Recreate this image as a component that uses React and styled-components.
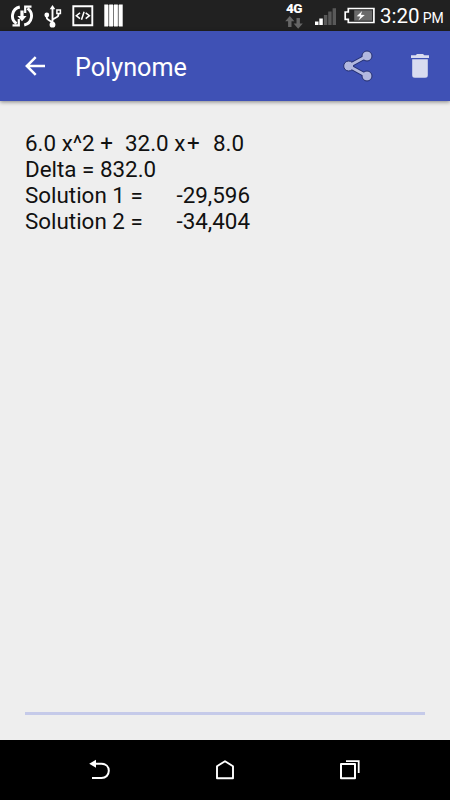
import styled, { createGlobalStyle } from "styled-components";
import React from "react";

const lines = [
  [
    { text: "6.0 x^2 +", at: 25, width: 88 },
    { text: "32.0 x", at: 125, width: 60 },
    { text: "+", at: 187, width: 14 },
    { text: "8.0", at: 213, width: 30 },
  ],
  [{ text: "Delta = 832.0", at: 25, width: 131 }],
  [
    { text: "Solution 1 =", at: 25, width: 118 },
    { text: "-29,596", at: 176.5, width: 74 },
  ],
  [
    { text: "Solution 2 =", at: 25, width: 118 },
    { text: "-34,404", at: 176.5, width: 74 },
  ],
];

const SyncIcon = () => (
  <svg width="24" height="24" viewBox="0 0 24 24" fill="none" stroke="#fff" strokeWidth="2.900">
    <path d="M9.800 3A9.200 9.200 0 0 0 6.500 19.600" />
    <path d="M14.200 21A9.200 9.200 0 0 0 17.500 4.400" />
    <path d="M2.500 21.300h6.300v-6.300M21.500 2.700h-6.300v6.300" strokeWidth="2.200" />
    <path d="M10.400 6.500h3.200v5.500h3L12 17.300 7.400 12h3z" fill="#fff" stroke="none" />
  </svg>
);

const UsbIcon = () => (
  <svg width="18" height="24" viewBox="0 0 18 24" fill="none" stroke="#fff" strokeWidth="1.900">
    <path d="M8.500 4v16M8.500 18.500L4 15.500q-1.300-.9-1.300-2.200V10M8.500 15.500l4.500-2.500q1.500-.8 1.500-2.500V9" />
    <path d="M8.500 1l2.800 4.200H5.700z" fill="#fff" stroke="none" />
    <path d="M12.900 6h3.500v3.500h-3.500z" strokeWidth="1.500" />
    <circle cx="2.800" cy="11" r="2.400" fill="#fff" stroke="none" />
    <circle cx="8.500" cy="20.700" r="2.900" fill="#fff" stroke="none" />
  </svg>
);

const CodeIcon = () => (
  <svg width="22" height="22" viewBox="0 0 22 22" fill="none" stroke="#fff">
    <path d="M1.300 1.300h19v19h-19z" strokeWidth="1.900" />
    <path d="M8 7.800l-3.700 2.900L8 13.600M13.700 7.800l3.700 2.900-3.700 2.900M12.100 6.700L9.500 14.700" strokeWidth="1.500" />
  </svg>
);

const BarsIcon = () => (
  <svg width="19" height="23" viewBox="0 0 19 23" fill="#fff">
    <path fill="#777" d="M1 1h17v21H1z" />
    <path d="M.3.500h3.800v22H.3zM5.200.500H9v22H5.200zM10 .500h3.800v22H10zM14.900.500h3.800v22h-3.800z" />
  </svg>
);

const DataArrows = () => (
  <svg width="18" height="13" viewBox="0 0 18 13" fill="#666">
    <path d="M4.800 0l4.600 5.300H6.500V11H3.100V5.300H.2zM13.200 12.800L8.600 7.500h2.900V2h3.400v5.500h2.900z" />
  </svg>
);

const SignalIcon = () => (
  <svg width="22" height="18" viewBox="0 0 22 18">
    <path fill="#fff" d="M0 13.500h3.500V17H0zM4.300 10.500h3.500V17H4.300z" />
    <path fill="#595959" d="M8.900 7h3.400v10H8.900zM13.200 3.500h3.400V17h-3.400zM17.600.2H21V17h-3.400z" />
  </svg>
);

const BatteryIcon = () => (
  <svg width="32" height="18" viewBox="0 0 32 18">
    <path d="M4.300 1.500h25.600v14H4.300v-3.200H1.200V5h3.100z" fill="none" stroke="#fff" strokeWidth="1.700" />
    <path d="M10.200 3.300h18v10.400h-18z" fill="#6b6b6b" />
    <path d="M18.200 4l-5.500 5.300 3.700.2-2 3.900 6.400-5.400-3.900-.3z" fill="#fff" />
  </svg>
);

const BackArrow = () => (
  <svg width="22" height="22" viewBox="0 0 22 22" fill="none" stroke="#fff" strokeWidth="2.500">
    <path d="M21 11H3M11.700 2.100L2.800 11l8.900 8.900" />
  </svg>
);

const ShareIcon = () => (
  <svg width="32" height="32" viewBox="0 0 32 32">
    <path d="M25 6L6.700 16 25 26" fill="none" stroke="#242f70" strokeWidth="4.600" />
    <g fill="#b2b8df" stroke="#242f70" strokeWidth="1">
      <circle cx="25" cy="6" r="5" />
      <circle cx="6.700" cy="16" r="5" />
      <circle cx="25" cy="26" r="5" />
    </g>
    <path d="M25 6L6.700 16 25 26" fill="none" stroke="#b2b8df" strokeWidth="2.700" />
  </svg>
);

const TrashIcon = () => (
  <svg width="18" height="24" viewBox="0 0 18 24" fill="#d9dcf0">
    <path d="M0 1.300h4.700L6 0h6l1.300 1.300H18V4H0zM1.200 5.300h15.600v16q0 2.500-2.600 2.500H3.800q-2.600 0-2.600-2.500z" />
  </svg>
);

const NavBackIcon = () => (
  <svg width="22" height="22" viewBox="0 0 22 22">
    <path d="M6 4.700h6.500c4.300 0 7.300 2.800 7.300 7s-3 7.300-7.300 7.300H3" fill="none" stroke="#fff" strokeWidth="2" />
    <path d="M.2 4.700L7 .8v7.900z" fill="#fff" />
  </svg>
);

const NavHomeIcon = () => (
  <svg width="20" height="22" viewBox="0 0 20 22" fill="none" stroke="#fff" strokeWidth="1.900">
    <path d="M2 7.200L10 2.200l8 5V19.300H2z" strokeLinejoin="round" />
  </svg>
);

const NavRecentIcon = () => (
  <svg width="22" height="22" viewBox="0 0 22 22" fill="none" stroke="#fff" strokeWidth="2">
    <path d="M2 5h14v14.200H2z" strokeLinejoin="round" />
    <path d="M7 2.200h12.700V14" strokeWidth="1.800" />
  </svg>
);

const App = () => {
  return (
    <>
      <GlobalStyle />
      <Screen>
        <StatusBar>
          <Notifications>
            <SyncIcon />
            <UsbIcon />
            <CodeIcon />
            <BarsIcon />
          </Notifications>
          <Network>
            <span>4G</span>
            <DataArrows />
          </Network>
          <Signal>
            <SignalIcon />
          </Signal>
          <Battery>
            <BatteryIcon />
          </Battery>
          <Clock>
            3:20 <small>PM</small>
          </Clock>
        </StatusBar>
        <Toolbar>
          <IconButton aria-label="Back">
            <BackArrow />
          </IconButton>
          <Title>Polynome</Title>
          <IconButton aria-label="Share">
            <ShareIcon />
          </IconButton>
          <IconButton aria-label="Delete" $gap={37}>
            <TrashIcon />
          </IconButton>
        </Toolbar>
        <Content>
          <Results>
            {lines.map((parts, row) => (
              <Line key={row}>
                {parts.map((part, i) => {
                  const prev = parts[i - 1];
                  const gap = prev ? part.at - prev.at - prev.width : 0;
                  return (
                    <Part key={part.at} $gap={gap} $width={part.width}>
                      {part.text}
                    </Part>
                  );
                })}
              </Line>
            ))}
          </Results>
          <Underline />
        </Content>
        <NavBar>
          <NavBackIcon />
          <NavHomeIcon />
          <NavRecentIcon />
        </NavBar>
      </Screen>
    </>
  );
};

const GlobalStyle = createGlobalStyle`
  body {
    margin: 0;
    font-family: Roboto, "Liberation Sans", sans-serif;
  }

  svg {
    display: block;
    flex-shrink: 0;
  }
`;

const Screen = styled.div`
  display: flex;
  flex-direction: column;
  width: 450px;
  height: 800px;
  overflow: hidden;
  background-color: #eeeeee;
`;

const StatusBar = styled.div`
  display: flex;
  align-items: center;
  box-sizing: border-box;
  height: 31px;
  padding: 0 7px 0 10px;
  background-color: #212121;
  color: white;
`;

const Notifications = styled.div`
  display: flex;
  align-items: center;
  gap: 10px;
  margin-right: auto;
`;

const Network = styled.div`
  display: flex;
  flex-direction: column;
  align-items: center;
  gap: 2px;
  margin-right: 12px;

  span {
    font-size: 13.5px;
    line-height: 11px;
    font-weight: 900;
    letter-spacing: -0.5px;
  }
`;

const Signal = styled.div`
  padding-top: 2px;
`;

const Battery = styled.div`
  margin: 0 4px 0 7px;
`;

const Clock = styled.div`
  width: 63px;
  padding-top: 3px;
  font-size: 20.5px;
  line-height: 28px;
  white-space: nowrap;

  small {
    font-size: 14px;
    margin-left: -2px;
  }
`;

const Toolbar = styled.div`
  display: flex;
  align-items: center;
  box-sizing: border-box;
  height: 70px;
  padding: 0 21px 0 24px;
  background-color: #3f51b5;
  box-shadow: 0 1px 4px rgba(0, 0, 0, 0.45);
`;

const IconButton = styled.button`
  padding: 0;
  margin-left: ${(props) => props.$gap || 0}px;
  border: none;
  background-color: transparent;
`;

const Title = styled.h1`
  flex-grow: 1;
  margin: 3px 0 0 29px;
  color: white;
  font-size: 25.2px;
  font-weight: 400;
`;

const Content = styled.div`
  display: flex;
  flex-direction: column;
  flex-grow: 1;
  padding: 29px 25px 25px;
`;

const Results = styled.div`
  flex-grow: 1;
  color: #111111;
  font-size: 22.4px;
  line-height: 26px;
`;

const Line = styled.div`
  display: flex;
`;

const Part = styled.span`
  width: ${(props) => props.$width}px;
  margin-left: ${(props) => props.$gap}px;
  white-space: nowrap;
`;

const Underline = styled.div`
  height: 3px;
  background-color: #c5cae9;
`;

const NavBar = styled.div`
  display: flex;
  justify-content: center;
  align-items: center;
  gap: 104px;
  height: 60px;
  background-color: black;
`;

export default App;
